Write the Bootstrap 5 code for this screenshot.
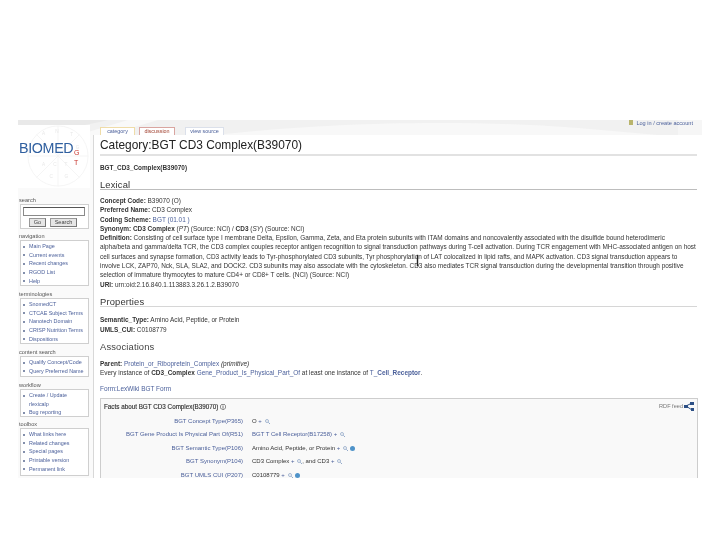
<!DOCTYPE html>
<html lang="en">
<head>
<meta charset="utf-8">
<title>Category:BGT CD3 Complex(B39070)</title>
<link href="https://cdn.jsdelivr.net/npm/bootstrap@5.3.0/dist/css/bootstrap.min.css" rel="stylesheet">
<style>
html,body{background:#fff;margin:0;height:540px;overflow:hidden}
body{font-family:"Liberation Sans",Arial,sans-serif;color:#333}
a{text-decoration:none;color:#4a5f9a}
.stage{position:relative;width:684px;height:358px;margin:120px 0 0 18px;overflow:hidden;filter:blur(.35px);
  background:linear-gradient(#f1f1f1,#f1f1f1) top/100% 15px no-repeat #fafafa;font-size:6.45px;line-height:9.3px}
.swoosh{position:absolute;left:0;top:0;width:684px;height:15px}
.side{width:75px;flex:none;position:relative}
.logo-box{height:63px;margin:5px 3px 0 0;background:#fff;position:relative;overflow:hidden}
.logo-ring{position:absolute;left:9px;top:0;width:62px;height:62px}
.logo-word{position:absolute;left:1px;top:14px;font-size:14.3px;line-height:18px;color:#2f5f9f;letter-spacing:-.35px}
.logo-red{position:absolute;left:56px;color:#c8362e;font-size:7px;line-height:8px}
.sec-title{font-size:5.6px;line-height:8px;color:#555;padding-left:1px;height:8px}
.sec-box{background:#fff;border:1px solid #cfcfcf;margin:0 4px 0 2px;width:69px;padding:1px 0 0 0}
.sec-box ul{margin:0;padding:0;list-style:none}
.sec-box li{height:8.7px;line-height:8.7px;font-size:5.4px;white-space:nowrap;position:relative;padding-left:8px}
.sec-box li::before{content:"";position:absolute;left:2px;top:3.5px;width:2px;height:2px;background:#5a6a90;border-radius:50%}
.sec-box li.nobullet::before{display:none}
.sb-input{display:block;width:62px;height:9px;border:1px solid #8a8a8a;border-top-color:#555;background:#fff;margin:2px 0 2px 1px}
.sb-btn{display:inline-block;border:1px solid #999;border-right-color:#777;border-bottom-color:#777;background:#e6e6e6;height:9px;line-height:7px;font-size:5.6px;text-align:center;color:#444}
.main{flex:1;min-width:0;position:relative}
.topbar{height:15px;position:relative}
.tabbar{position:absolute;left:7px;bottom:0;display:flex;gap:4px;align-items:flex-end}
.wtab{height:8px;line-height:7px;font-size:5.4px;text-align:center;background:#fff;border:1px solid #ddd;border-bottom:0}
.wtab-a{width:35px;border-color:#efdca8}
.wtab-b{width:36px;border-color:#d9a5a0;color:#a0402f;margin-right:6px}
.wtab-c{width:39px;border-color:#dbe0ea}
.login{position:absolute;right:9px;top:0;font-size:5.6px;line-height:4px;display:flex;align-items:center;gap:3px}
.login i{display:block;width:4px;height:5px;background:#b9b46c}
.body-pane{height:343px;background:#fff;border-left:1px solid #d8d8d8;padding:0 5px 0 6px;white-space:nowrap;overflow:hidden}
.wh1{font-size:11.9px;line-height:16px;color:#222;margin:2px 0 0;font-weight:400;padding-bottom:1px;border-bottom:2px solid #e2e2e2;height:18.5px}
.crumb{font-weight:700;font-size:6.4px;line-height:9px;margin-top:7px;color:#333}
.wh2{font-size:9.4px;line-height:12px;color:#333;margin:7px 0 0;font-weight:400;border-bottom:1px solid #bdbdbd;height:11.5px;letter-spacing:.15px}
.wh2-b{border-bottom-color:#d6d6d6}
.wh3{font-size:9.4px;line-height:12px;color:#444;margin:7px 0 0;font-weight:400;letter-spacing:.15px}
.para{margin:0}
.lead-6{margin-top:6px}
.lead-8{margin-top:8px}
.facts{position:relative;border:1px solid #cdcdcd;border-bottom:0;background:#f9f9f9;margin-top:5px;width:598px;height:90px;padding:3px 4px 0 3px}
.facts-h{font-size:6.3px;line-height:9px;font-weight:400;color:#333;-webkit-text-stroke:.15px #333}
.rdf{position:absolute;right:3px;top:3px;display:flex;align-items:center;gap:1px;color:#777;font-size:5.6px;line-height:9px}
.frows{margin-top:4px}
.frow{display:grid;grid-template-columns:139px 1fr;column-gap:9px;height:13.4px;line-height:13.4px;font-size:6px}
.frow>a:first-child{text-align:right}
.mag{display:inline-block;width:5px;height:5px;vertical-align:-1px;margin-left:1px}
.info{display:inline-block;width:5px;height:5px;background:#4f93c9;border-radius:50%;vertical-align:-1px;margin-left:2px}
.beam{position:absolute;left:324px;top:135px;width:1px;height:11px;background:#222;box-shadow:0 0 0 .2px #222}
</style>
</head>
<body>
<div class="stage d-flex">
  <svg class="swoosh" viewBox="0 0 684 15" aria-hidden="true"><path d="M200 15C290 4 430-2 560 8L640 15Z" fill="#f8f8f8"/><path d="M60 15 110 0h30L90 15Z" fill="#f9f9f9"/><path d="M0 15C40 10 70 5 90 0H0Z" fill="#e9e9e9"/><path d="M660 0h24v15h-24Z" fill="#f6f6f6"/></svg>
  <aside class="side">
    <div class="logo-box">
      <svg class="logo-ring" viewBox="0 0 66 66" aria-hidden="true"><g fill="none" stroke="#f1f1f1" stroke-width=".8"><circle cx="33" cy="33" r="32"/><path d="M1 33h64M33 1v64M10 10l46 46M56 10 10 56"/></g><g fill="#e8e8e8" font-size="5" font-family="Liberation Sans"><text x="16" y="11">A</text><text x="30" y="9">N</text><text x="46" y="12">T</text><text x="52" y="26">G</text><text x="28" y="44">C</text><text x="40" y="44">T</text><text x="16" y="44">A</text><text x="24" y="56">C</text><text x="40" y="56">G</text></g></svg>
      <span class="logo-word">BIOMED</span>
      <span class="logo-red" style="top:24px">G</span>
      <span class="logo-red" style="top:34px">T</span>
    </div>
    <div class="sec-title" style="margin-top:8px">search</div>
    <div class="sec-box" style="height:25px;padding:0 0 0 1px">
      <span class="sb-input"></span>
      <div class="d-flex" style="gap:4px;padding-left:7px"><span class="sb-btn" style="width:17px">Go</span><span class="sb-btn" style="width:27px">Search</span></div>
    </div>
    <div class="sec-title" style="margin-top:3px">navigation</div>
    <div class="sec-box" style="height:46px"><ul><li><a href="#">Main Page</a></li><li><a href="#">Current events</a></li><li><a href="#">Recent changes</a></li><li><a href="#">RGOD List</a></li><li><a href="#">Help</a></li></ul></div>
    <div class="sec-title" style="margin-top:4px">terminologies</div>
    <div class="sec-box" style="height:46px"><ul><li><a href="#">SnomedCT</a></li><li><a href="#">CTCAE Subject Terms</a></li><li><a href="#">Nanotech Domain</a></li><li><a href="#">CRISP Nutrition Terms</a></li><li><a href="#">Dispositions</a></li></ul></div>
    <div class="sec-title" style="margin-top:4px">content search</div>
    <div class="sec-box" style="height:21px"><ul><li><a href="#">Qualify Concept/Code</a></li><li><a href="#">Query Preferred Name</a></li></ul></div>
    <div class="sec-title" style="margin-top:4px">workflow</div>
    <div class="sec-box" style="height:28px"><ul><li><a href="#">Create / Update</a></li><li class="nobullet"><a href="#">rlexicalp</a></li><li><a href="#">Bug reporting</a></li></ul></div>
    <div class="sec-title" style="margin-top:3px">toolbox</div>
    <div class="sec-box" style="height:48px"><ul><li><a href="#">What links here</a></li><li><a href="#">Related changes</a></li><li><a href="#">Special pages</a></li><li><a href="#">Printable version</a></li><li><a href="#">Permanent link</a></li></ul></div>
  </aside>
  <main class="main">
    <div class="topbar">
      <div class="tabbar">
        <a class="wtab wtab-a" href="#">category</a>
        <a class="wtab wtab-b" href="#">discussion</a>
        <a class="wtab wtab-c" href="#">view source</a>
      </div>
      <div class="login"><i></i><a href="#">Log in / create account</a></div>
    </div>
    <div class="body-pane">
      <h1 class="wh1">Category:BGT CD3 Complex(B39070)</h1>
      <div class="crumb">BGT_CD3_Complex(B39070)</div>
      <h2 class="wh2">Lexical</h2>
      <p class="para lead-6"><b>Concept Code:</b> B39070 (O)<br>
      <b>Preferred Name:</b> CD3 Complex<br>
      <b>Coding Scheme:</b> <a href="#">BGT (01.01 )</a><br>
      <b>Synonym: CD3 Complex</b> (<i>PT</i>) (Source: NCI) / <b>CD3</b> (<i>SY</i>) (Source: NCI)<br>
      <b>Definition:</b> Consisting of cell surface type I membrane Delta, Epsilon, Gamma, Zeta, and Eta protein subunits with ITAM domains and noncovalently associated with the disulfide bound heterodimeric<br>
      alpha/beta and gamma/delta TCR, the CD3 complex couples receptor antigen recognition to signal transduction pathways during T-cell activation. During TCR engagement with MHC-associated antigen on host<br>
      cell surfaces and synapse formation, CD3 activity leads to Tyr-phosphorylated CD3 subunits, Tyr phosphorylation of LAT colocalized in lipid rafts, and MAPK activation. CD3 signal transduction appears to<br>
      involve LCK, ZAP70, Nck, SLA, SLA2, and DOCK2. CD3 subunits may also associate with the cytoskeleton. CD3 also mediates TCR signal transduction during the developmental transition through positive<br>
      selection of immature thymocytes to mature CD4+ or CD8+ T cells. (NCI) (Source: NCI)<br>
      <b>URI:</b> urn:oid:2.16.840.1.113883.3.26.1.2.B39070</p>
      <h2 class="wh2 wh2-b">Properties</h2>
      <p class="para lead-8"><b>Semantic_Type:</b> Amino Acid, Peptide, or Protein<br><b>UMLS_CUI:</b> C0108779</p>
      <h3 class="wh3">Associations</h3>
      <p class="para lead-6"><b>Parent:</b> <a href="#">Protein_or_Ribopretein_Complex</a> <i>(primitive)</i><br>
      Every instance of <b>CD3_Complex</b> <a href="#">Gene_Product_Is_Physical_Part_Of</a> at least one instance of <a href="#">T_<b>Cell_Receptor</b></a>.</p>
      <p class="para lead-6"><a href="#">Form:LexWiki BGT Form</a></p>
      <div class="facts">
        <div class="facts-h">Facts about BGT CD3 Complex(B39070) &#9432;</div>
        <div class="rdf">RDF feed
          <svg width="10" height="9" viewBox="0 0 10 9" aria-hidden="true"><g fill="#2c4f85"><rect x="0" y="3" width="4" height="3"/><rect x="6" y="0" width="4" height="3"/><rect x="7" y="6" width="3" height="3"/></g><path d="M2 4 8 1M2 4l6 4" stroke="#2c4f85" fill="none"/></svg>
        </div>
        <div class="frows">
        <div class="frow"><a href="#">BGT Concept Type(P365)</a><span>O <a href="#">+</a> <svg class="mag" viewBox="0 0 6 6" aria-hidden="true"><circle cx="2.4" cy="2.4" r="1.8" fill="none" stroke="#7f9ac0" stroke-width=".8"/><path d="M4 4 6 6" stroke="#7f9ac0"/></svg></span></div>
        <div class="frow"><a href="#">BGT Gene Product Is Physical Part Of(R51)</a><span><a href="#">BGT T Cell Receptor(B17258)</a> <a href="#">+</a> <svg class="mag" viewBox="0 0 6 6" aria-hidden="true"><circle cx="2.4" cy="2.4" r="1.8" fill="none" stroke="#7f9ac0" stroke-width=".8"/><path d="M4 4 6 6" stroke="#7f9ac0"/></svg></span></div>
        <div class="frow"><a href="#">BGT Semantic Type(P106)</a><span>Amino Acid, Peptide, or Protein <a href="#">+</a> <svg class="mag" viewBox="0 0 6 6" aria-hidden="true"><circle cx="2.4" cy="2.4" r="1.8" fill="none" stroke="#7f9ac0" stroke-width=".8"/><path d="M4 4 6 6" stroke="#7f9ac0"/></svg><span class="info"></span></span></div>
        <div class="frow"><a href="#">BGT Synonym(P104)</a><span>CD3 Complex <a href="#">+</a> <svg class="mag" viewBox="0 0 6 6" aria-hidden="true"><circle cx="2.4" cy="2.4" r="1.8" fill="none" stroke="#7f9ac0" stroke-width=".8"/><path d="M4 4 6 6" stroke="#7f9ac0"/></svg>, and CD3 <a href="#">+</a> <svg class="mag" viewBox="0 0 6 6" aria-hidden="true"><circle cx="2.4" cy="2.4" r="1.8" fill="none" stroke="#7f9ac0" stroke-width=".8"/><path d="M4 4 6 6" stroke="#7f9ac0"/></svg></span></div>
        <div class="frow"><a href="#">BGT UMLS CUI (P207)</a><span>C0108779 <a href="#">+</a> <svg class="mag" viewBox="0 0 6 6" aria-hidden="true"><circle cx="2.4" cy="2.4" r="1.8" fill="none" stroke="#7f9ac0" stroke-width=".8"/><path d="M4 4 6 6" stroke="#7f9ac0"/></svg><span class="info"></span></span></div>
        </div>
      </div>
    </div>
    <span class="beam"></span>
  </main>
</div>
<script src="https://cdn.jsdelivr.net/npm/bootstrap@5.3.0/dist/js/bootstrap.bundle.min.js"></script>
</body>
</html>
